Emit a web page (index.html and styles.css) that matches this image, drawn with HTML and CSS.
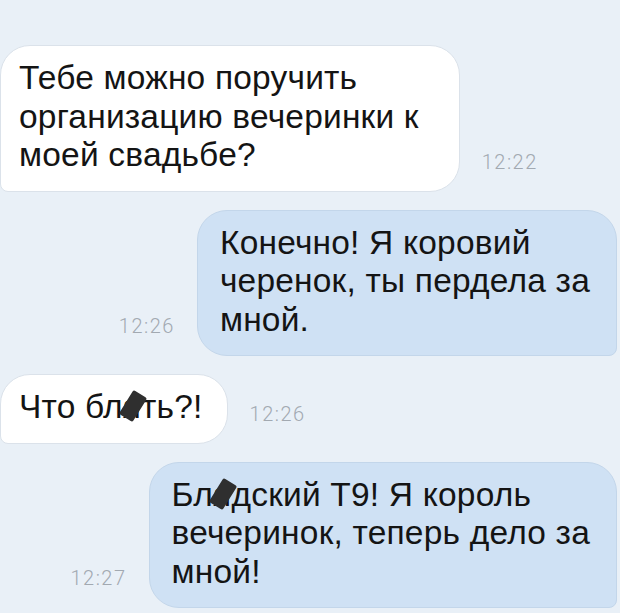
FILE: index.html
```html
<!DOCTYPE html>
<html lang="ru">
<head>
  <meta charset="UTF-8">
  <meta name="viewport" content="width=device-width, initial-scale=1.0">
  <title>Чат</title>
  <link rel="stylesheet" href="styles.css">
</head>
<body>
  <div class="chat">
    <div class="row in">
      <div class="bubble wide">Тебе можно поручить<br>организацию вечеринки к<br>моей свадьбе?</div>
      <span class="time">12:22</span>
    </div>

    <div class="row out">
      <span class="time">12:26</span>
      <div class="bubble">Конечно! Я коровий<br>черенок, ты пердела за<br>мной.</div>
    </div>

    <div class="row in">
      <div class="bubble">Что бл<span class="censor">я</span>ть?!</div>
      <span class="time">12:26</span>
    </div>

    <div class="row out">
      <span class="time">12:27</span>
      <div class="bubble">Бл<span class="censor">я</span>дский Т9! Я король<br>вечеринок, теперь дело за<br>мной!</div>
    </div>
  </div>
</body>
</html>
```

FILE: styles.css
```css
body {
  margin: 0;
  background: #e9f0f7;
  font-family: "Liberation Sans", Arial, sans-serif;
  color: #141414;
}
.chat {
  display: flex;
  flex-direction: column;
  gap: 18px;
  padding: 45px 3px 0 0;
}
.row {
  display: flex;
  align-items: flex-end;
}
.row.out {
  justify-content: flex-end;
}
.bubble {
  font-size: 33.5px;
  letter-spacing: 0.2px;
  line-height: 38.5px;
  padding: 13px 24px 16px 18px;
  border-radius: 30px;
  white-space: nowrap;
}
.bubble.wide {
  padding-right: 40px;
}
.in .bubble {
  background: #fff;
  border: 1px solid #dbe2ea;
  border-bottom-left-radius: 8px;
}
.out .bubble {
  background: #cfe1f4;
  border: 1px solid #c3d6ea;
  border-bottom-right-radius: 8px;
  padding-left: 22px;
  padding-right: 26px;
}
.time {
  font-family: Roboto, "Liberation Sans", sans-serif;
  font-weight: 300;
  font-size: 20px;
  letter-spacing: 1.5px;
  color: #a2a9b1;
  margin-bottom: 18px;
}
.in .time {
  margin-left: 22px;
}
.out .time {
  margin-right: 22px;
}
.censor {
  position: relative;
}
.censor::after {
  content: "";
  position: absolute;
  left: 2px;
  top: 4px;
  width: 16px;
  height: 28px;
  background: #2f2f2f;
  transform: rotate(32deg);
  border-radius: 2px;
}
```
